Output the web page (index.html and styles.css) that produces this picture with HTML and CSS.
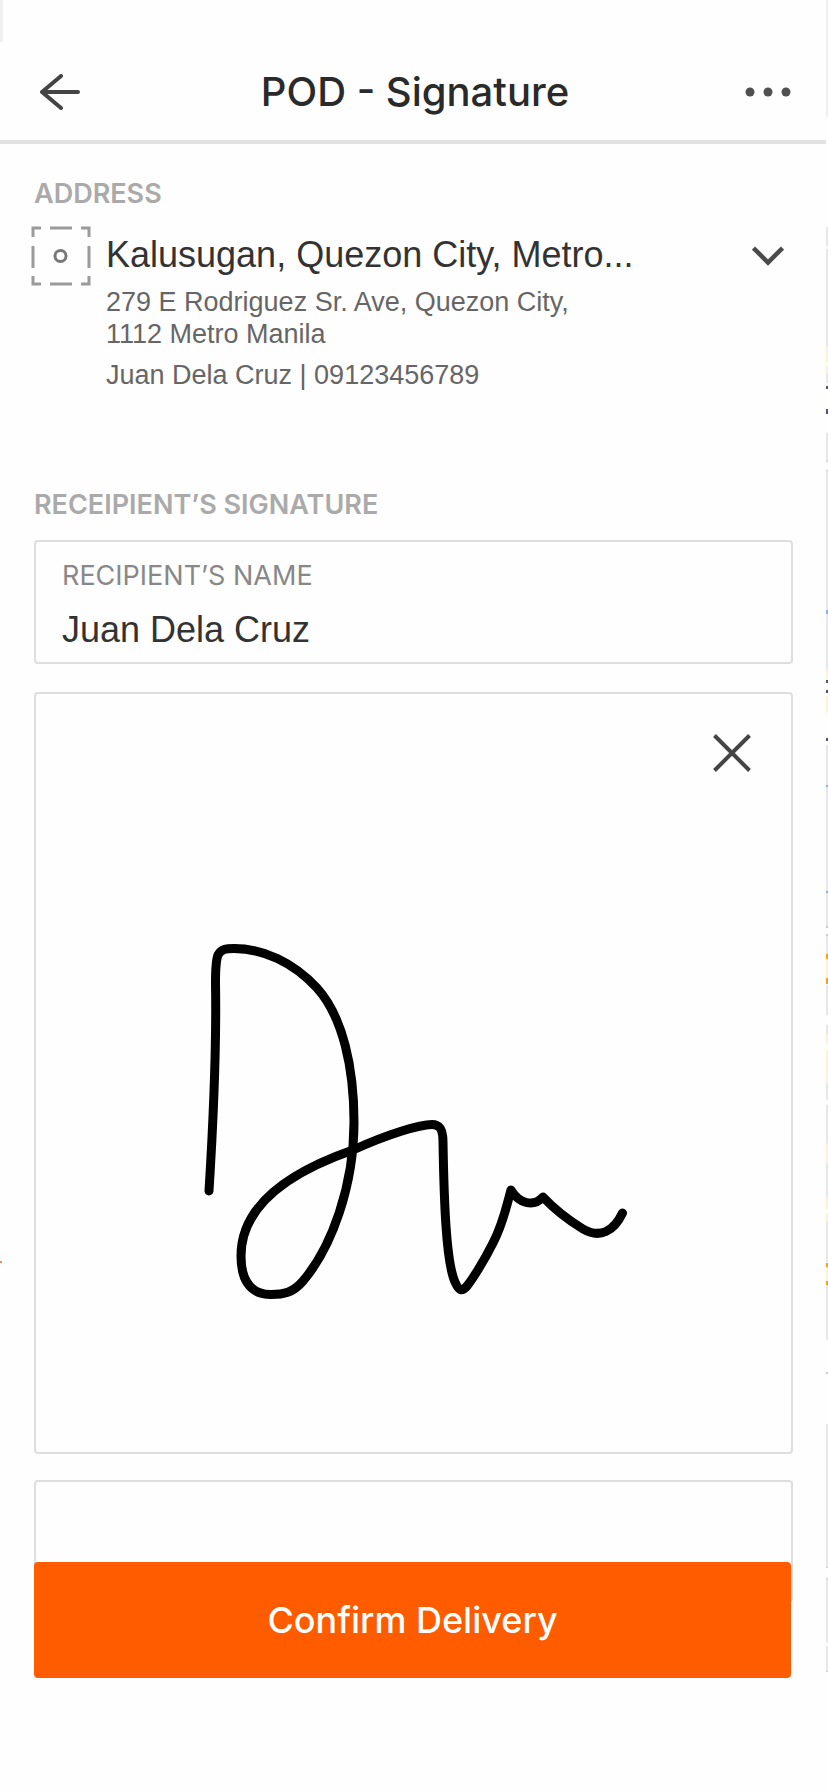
FILE: index.html
```html
<!DOCTYPE html>
<html lang="en">
<head>
<meta charset="utf-8">
<meta name="viewport" content="width=device-width, initial-scale=1">
<title>POD - Signature</title>
<link rel="stylesheet" href="styles.css">
</head>
<body>
<svg class="map-edge map-edge-right" width="2" height="1792" viewBox="0 0 2 1792" shape-rendering="crispEdges" aria-hidden="true">
  <path fill="#efefef" d="M0 0h2v117H0z"/>
  <path fill="#e6e6ec" d="M0 227h2v19H0zM0 249h2v97H0zM0 374h2v9H0zM0 433h2v29H0zM0 470h2v199H0zM0 745h2v181H0zM0 935h2v20H0zM0 985h2v30H0zM0 1025h2v9H0zM0 1084h2v16H0zM0 1105h2v38H0zM0 1164h2v33H0zM0 1222h2v40H0zM0 1285h2v55H0zM0 1424h2v143H0zM0 1578h2v65H0zM0 1646h2v26H0z"/>
  <path fill="#fff3cf" d="M0 346h2v17H0zM0 366h2v8H0zM0 669h2v10H0zM0 696h2v17H0zM0 957h2v23H0zM0 1034h2v10H0zM0 1050h2v34H0zM0 1143h2v21H0zM0 1197h2v12H0zM0 1213h2v9H0zM0 1266h2v16H0z"/>
  <path fill="#f5a313" d="M0 954h2v5H0zM0 978h2v6H0zM0 1263h2v4H0zM0 1281h2v4H0z"/>
  <path fill="#4b5a6b" d="M0 386h2v3H0zM0 409h2v5H0zM0 680h2v3H0zM0 690h2v3H0zM0 738h2v3H0z"/>
  <path fill="#86b4fa" d="M0 610h2v4H0zM0 785h2v2H0zM0 891h2v2H0z"/>
  <path fill="#ccc" d="M0 461h2v1H0zM0 470h2v1H0zM0 926h2v2H0zM0 934h2v2H0zM0 1372h2v2H0zM0 1567h2v1H0zM0 1578h2v1H0zM0 1671h2v1H0z"/>
</svg>
<svg class="map-edge map-edge-left" width="3" height="1792" viewBox="0 0 3 1792" shape-rendering="crispEdges" aria-hidden="true">
  <path fill="#efefef" d="M0 0h3v42H0z"/>
  <path fill="#f58a5a" d="M0 1261h2v2H0z"/>
</svg>
<div class="screen">
  <header class="topbar">
    <button class="icon-button" type="button" aria-label="Back">
      <svg width="42" height="36" viewBox="0 0 42 36" fill="none" stroke="#444" stroke-width="4" stroke-linecap="round" stroke-linejoin="round"><path d="M39 18H3M22 2 3 18 22 34"/></svg>
    </button>
    <h1 class="title">POD - Signature</h1>
    <button class="icon-button icon-button-end" type="button" aria-label="More options">
      <svg width="46" height="10" viewBox="0 0 46 10" fill="#505050"><circle cx="5" cy="5" r="4.500"/><circle cx="23" cy="5" r="4.500"/><circle cx="41" cy="5" r="4.500"/></svg>
    </button>
  </header>

  <main class="content">
    <section class="address">
      <h2 class="section-label">ADDRESS</h2>
      <div class="address-row">
        <svg class="pin" width="60" height="60" viewBox="0 0 60 60" fill="none" stroke="#9a9a9a" stroke-width="3"><path d="M2 11V2h8M19 2h22M50 2h8v9M58 20v22M58 50v8h-8M41 58H19M10 58H2v-8M2 42V20"/><circle cx="29.500" cy="30" r="5.500" stroke="#777"/></svg>
        <div class="address-text">
          <p class="place">Kalusugan, Quezon City, Metro...</p>
          <p class="detail">279 E Rodriguez Sr. Ave, Quezon City,<br>1112 Metro Manila</p>
          <p class="detail contact">Juan Dela Cruz | 09123456789</p>
        </div>
        <button class="icon-button expand" type="button" aria-label="Show full address">
          <svg width="32" height="20" viewBox="0 0 32 20" fill="none" stroke="#4a4a4a" stroke-width="4.500"><path d="M1.500 2 16 16.500 30.500 2"/></svg>
        </button>
      </div>
    </section>

    <section class="signature">
      <h2 class="section-label">RECEIPIENT’S SIGNATURE</h2>
      <div class="box name-box">
        <label class="name-label" for="name">RECIPIENT’S NAME</label>
        <input class="name-input" id="name" type="text" value="Juan Dela Cruz">
      </div>
      <div class="box pad">
        <button class="icon-button clear" type="button" aria-label="Clear signature">
          <svg width="38" height="38" viewBox="0 0 38 38" fill="none" stroke="#444" stroke-width="4"><path d="M1.500 1.500l35 35M36.500 1.500l-35 35"/></svg>
        </button>
        <svg class="ink" viewBox="180 920 470 400" fill="none" stroke="#000" stroke-width="9" stroke-linecap="round" stroke-linejoin="round" role="img" aria-label="Signature"><path d="M209 1191C214 1110 216.500 1040 215.500 983C215.500 968 216 960 218 955C221 949 226 948.500 234 948.500C263 948.500 293 962 317 988C343 1017 354 1068 354 1122C354 1185 332 1247 303 1281C293 1293 283 1294.500 271 1294.500C248 1294.500 241 1277 241 1256C241 1205 290 1172 353 1150C388 1134 420 1124.500 432 1124.500C439 1124.500 443 1128 443 1142C444 1200 446 1262 455 1282C459 1291 462 1292 467 1286C472 1280 484 1261 493 1243C503 1224 506 1208 511 1190C519 1203 533 1208 543 1197C556 1211 570 1221 583 1229C600 1239 614 1231 622.500 1213"/></svg>
      </div>
      <div class="box next-box"></div>
    </section>
  </main>

  <footer class="actions">
    <button class="confirm" type="submit">Confirm Delivery</button>
  </footer>
</div>
</body>
</html>
```
FILE: styles.css
```css
* { box-sizing: border-box; }
body { position: relative; margin: 0; background: #fefefe; font-family: "Liberation Sans", Arial, sans-serif; }
h1, h2, p { margin: 0; }
button, input { border: 0; padding: 0; background: none; font: inherit; }

.screen { min-height: 100vh; margin-right: 2px; }

/* slivers of the map that show beside the sheet */
.map-edge { position: absolute; top: 0; }
.map-edge-left { left: 0; }
.map-edge-right { right: 0; }

.topbar { display: grid; grid-template-columns: 60px 1fr 60px; align-items: center; padding: 60px 35px 16px 39px; border-bottom: 4px solid #e2e2e2; }
.title { font: 500 40px/64px Inter, sans-serif; color: #2a2a2a; text-align: center; }
.icon-button { display: flex; flex: none; }
.icon-button-end { justify-content: flex-end; }

.content { padding: 35px 33px 0 34px; }
.section-label { font: 600 27px/30px Inter, sans-serif; color: #aaa; }
.address-row { display: flex; align-items: flex-start; margin-top: 15px; }
.pin { flex: none; margin: 2px 15px 0 -3px; }
.address-text { flex: 1; min-width: 0; padding-top: 4px; }
.place { font-size: 36px; line-height: 54px; color: #333; }
.detail { font-size: 27px; line-height: 32px; margin-top: 4px; color: #666; }
.contact { margin-top: 9px; }
.expand { margin: 22px 9px 0 0; }

.signature { margin-top: 99px; }
.box { border: 2px solid #dedede; border-radius: 4px; }
.name-box { margin-top: 20px; padding: 18px 26px 10px; }
.name-label { display: block; font: 400 27px/32px Inter, sans-serif; color: #888; }
.name-input { display: block; width: 100%; height: 44px; margin-top: 16px; font-size: 36px; color: #333; }
.pad { margin-top: 28px; padding: 40px 40px 132px; }
.clear { margin-left: auto; }
.ink { display: block; width: calc(100% - 205px); margin: 148px 0 0 104px; }
.next-box { height: 122px; margin-top: 26px; }

.actions { position: relative; margin: -40px 35px 0 34px; }
.confirm { width: 100%; height: 116px; border-radius: 4px; background: #ff5c00; color: #fff; font: 500 36px/40px Inter, sans-serif; }
```
